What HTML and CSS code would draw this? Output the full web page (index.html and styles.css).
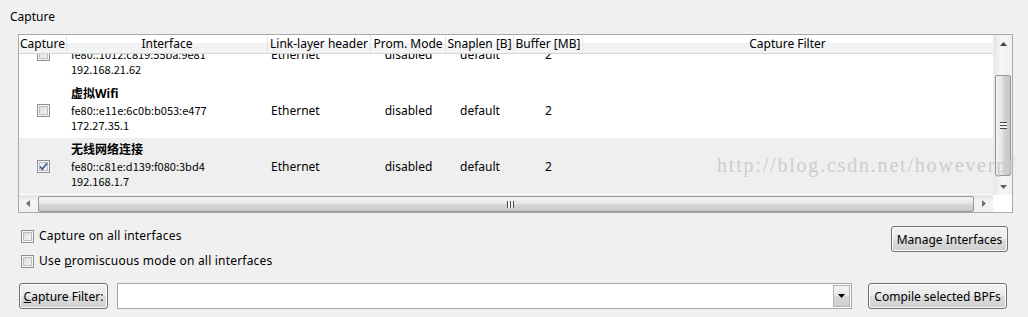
FILE: index.html
```html
<!DOCTYPE html>
<html>
<head>
<meta charset="utf-8">
<link rel="stylesheet" href="styles.css">
</head>
<body>
<div class="panel-title">Capture</div>

<div class="iface-list">
  <div class="viewport">
    <div class="list-head cols">
      <div class="hcell">Capture</div>
      <div class="hcell">Interface</div>
      <div class="hcell">Link-layer header</div>
      <div class="hcell">Prom. Mode</div>
      <div class="hcell">Snaplen [B]</div>
      <div class="hcell">Buffer [MB]</div>
      <div class="hcell last">Capture Filter</div>
    </div>
    <div class="list-body">
      <div class="iface-row cols first">
        <div class="cell-check"><span class="check"></span></div>
        <div class="cell-iface">
          <div class="iface-name">本地连接</div>
          <div class="iface-mac">fe80::1012:c819:55ba:9e81</div>
          <div class="iface-ip">192.168.21.62</div>
        </div>
        <div class="cell-link">Ethernet</div>
        <div class="cell-mid">disabled</div>
        <div class="cell-mid">default</div>
        <div class="cell-mid">2</div>
        <div></div>
      </div>
      <div class="iface-row cols">
        <div class="cell-check"><span class="check"></span></div>
        <div class="cell-iface">
          <div class="iface-name">虚拟Wifi</div>
          <div class="iface-mac">fe80::e11e:6c0b:b053:e477</div>
          <div class="iface-ip">172.27.35.1</div>
        </div>
        <div class="cell-link">Ethernet</div>
        <div class="cell-mid">disabled</div>
        <div class="cell-mid">default</div>
        <div class="cell-mid">2</div>
        <div></div>
      </div>
      <div class="iface-row cols selected">
        <div class="cell-check">
          <span class="check checked">
            <svg width="11" height="11" viewBox="0 0 11 11"><path d="M2 5.5 L4.3 8.2 L9 2.2" fill="none" stroke="#3f5a98" stroke-width="1.7"/></svg>
          </span>
        </div>
        <div class="cell-iface">
          <div class="iface-name">无线网络连接</div>
          <div class="iface-mac">fe80::c81e:d139:f080:3bd4</div>
          <div class="iface-ip">192.168.1.7</div>
        </div>
        <div class="cell-link">Ethernet</div>
        <div class="cell-mid">disabled</div>
        <div class="cell-mid">default</div>
        <div class="cell-mid">2</div>
        <div></div>
      </div>
    </div>
  </div>

  <div class="vscroll">
    <div class="sb-btn">
      <svg width="7" height="4" viewBox="0 0 7 4"><polygon points="0,4 7,4 3.5,0" fill="#404040"/></svg>
    </div>
    <div class="vtrack">
      <div class="vthumb"><span class="vgrip"></span></div>
    </div>
    <div class="sb-btn">
      <svg width="7" height="4" viewBox="0 0 7 4"><polygon points="0,0 7,0 3.5,4" fill="#606060"/></svg>
    </div>
  </div>

  <div class="hscroll">
    <div class="sb-btn hbtn">
      <svg width="4" height="7" viewBox="0 0 4 7"><polygon points="4,0 4,7 0,3.5" fill="#707070"/></svg>
    </div>
    <div class="hthumb"><span class="hgrip"></span></div>
    <div class="sb-btn hbtn">
      <svg width="4" height="7" viewBox="0 0 4 7"><polygon points="0,0 0,7 4,3.5" fill="#707070"/></svg>
    </div>
  </div>
  <div class="corner"></div>
</div>

<div class="options">
  <div class="option-list">
    <label class="option"><span class="check"></span><span>Capture on all interfaces</span></label>
    <label class="option"><span class="check"></span><span>Use <u>p</u>romiscuous mode on all interfaces</span></label>
  </div>
  <button class="btn manage">Manage Interfaces</button>
</div>

<div class="filter-row">
  <button class="btn filter-btn"><u>C</u>apture Filter:</button>
  <div class="combo">
    <span class="combo-text"></span>
    <span class="combo-drop">
      <svg width="7" height="4" viewBox="0 0 7 4"><polygon points="0,0 7,0 3.5,4" fill="#000"/></svg>
    </span>
  </div>
  <button class="btn compile">Compile selected BPFs</button>
</div>

<div class="watermark">http://blog.csdn.net/howeverpf</div>
</body>
</html>
```

FILE: styles.css
```css
body {
  margin: 0;
  width: 1028px;
  height: 317px;
  overflow: hidden;
  position: relative;
  background-color: #f0f0f0;
  font-family: "Noto Sans", "Noto Sans CJK SC", sans-serif;
  font-size: 12px;
  color: #000;
}

.panel-title {
  box-sizing: border-box;
  height: 25px;
  padding: 9px 10px 0;
  line-height: 16px;
}

/* interface list */
.iface-list {
  box-sizing: border-box;
  margin: 9px 0 0 18px;
  width: 995px;
  height: 179px;
  border: 1px solid #a9a9a9;
  background-color: #fff;
  display: grid;
  grid-template-columns: 974px 19px;
  grid-template-rows: 160px 17px;
}

.viewport {
  display: flex;
  flex-direction: column;
  overflow: hidden;
}

.cols {
  display: grid;
  grid-template-columns: 48px 201px 103px 75px 68px 69px 1fr;
}

.list-head {
  box-sizing: border-box;
  height: 19px;
  flex: none;
  border-bottom: 1px solid #d5d5d5;
  background: linear-gradient(#ffffff 0 8px, #f2f3f5 8px);
  position: relative;
  z-index: 1;
}
.hcell {
  line-height: 18px;
  text-align: center;
  white-space: nowrap;
  overflow: hidden;
  border-right: 1px solid #e3e5e8;
}
.hcell.last { border-right: 0; margin-right: 1px; }

.list-body {
  flex: 1;
  overflow: hidden;
}

.iface-row {
  height: 56px;
  align-items: center;
}
.iface-row.first { margin-top: -28px; }
.iface-row.selected { background-color: #efefef; }

.cell-check {
  display: flex;
  justify-content: center;
  padding-left: 1px;
}
.cell-iface {
  align-self: start;
  padding: 4px 0 0 4px;
}
.iface-name { font-weight: bold; line-height: 16px; }
.iface-mac,
.iface-ip {
  font-family: "Noto Sans CJK SC", "Noto Sans", sans-serif;
  font-size: 11px;
}
.iface-mac { line-height: 16px; }
.iface-ip { line-height: 14px; }
.cell-link { padding-left: 3px; }
.cell-mid { text-align: center; }

.check {
  box-sizing: border-box;
  display: inline-flex;
  align-items: center;
  justify-content: center;
  width: 13px;
  height: 13px;
  flex: none;
  border: 1px solid #8e8f8f;
  background: linear-gradient(135deg, #d3d6da, #fbfbfb);
  box-shadow: inset 0 0 0 1px #f6f6f6, inset 0 0 0 2px #b9bdc2;
}
.check.checked {
  background: linear-gradient(135deg, #dfe3ea, #fbfbfb);
}

/* scrollbars */
.sb-btn {
  height: 17px;
  flex: none;
  display: flex;
  align-items: center;
  justify-content: center;
}
.vscroll {
  display: flex;
  flex-direction: column;
  background: linear-gradient(90deg, #e6e6e6, #f6f6f6 40%, #f0f0f0);
  border-left: 1px solid #ececec;
}
.vtrack { flex: 1; padding: 23px 1px 0 1px; }
.vthumb {
  box-sizing: border-box;
  height: 101px;
  border: 1px solid #979797;
  border-radius: 2px;
  background: linear-gradient(90deg, #f2f2f2, #e6e6e6 45%, #d4d4d4 55%, #c6c6c6);
  display: flex;
  align-items: center;
  justify-content: center;
}
.vgrip {
  width: 7px;
  height: 7px;
  background: repeating-linear-gradient(#4a4a4a 0 1px, #f4f4f4 1px 3px);
}

.hscroll {
  display: flex;
  background: linear-gradient(#e4e4e4, #f5f5f5 40%, #efefef);
}
.hbtn { width: 18px; height: auto; }
.hthumb {
  box-sizing: border-box;
  flex: 1;
  margin: 1px 1px 0;
  border: 1px solid #979797;
  border-radius: 2px;
  background: linear-gradient(#f3f3f3, #e7e7e7 45%, #d6d6d6 55%, #c9c9c9);
  display: flex;
  align-items: center;
  justify-content: center;
}
.hgrip {
  width: 7px;
  height: 7px;
  margin-left: 8px;
  background: repeating-linear-gradient(90deg, #4a4a4a 0 1px, #f4f4f4 1px 3px);
}
.corner { background-color: #fff; }

/* options */
.options {
  display: flex;
  justify-content: space-between;
  align-items: flex-start;
  margin-top: 13px;
  padding: 0 20px 0 21px;
}
.option-list {
  display: flex;
  flex-direction: column;
  gap: 9px;
  padding-top: 2px;
  letter-spacing: 0.2px;
}
.option {
  display: flex;
  align-items: center;
  gap: 5px;
  line-height: 16px;
}

.btn {
  box-sizing: border-box;
  height: 26px;
  padding: 0;
  border: 1px solid #707070;
  border-radius: 3px;
  background: linear-gradient(#f2f2f2, #ebebeb 48%, #dddddd 52%, #cfcfcf);
  box-shadow: inset 0 0 0 1px #fbfbfb;
  font: inherit;
  color: #000;
  text-align: center;
}
.manage { width: 117px; }

.filter-row {
  display: flex;
  align-items: center;
  margin-top: 14px;
  padding-left: 19px;
}
.filter-btn { width: 89px; }
.combo {
  box-sizing: border-box;
  width: 735px;
  height: 26px;
  margin: 0 16px 0 9px;
  border: 1px solid #a6a6a6;
  background-color: #fff;
  display: flex;
  justify-content: flex-end;
  padding: 1px;
}
.combo-drop {
  box-sizing: border-box;
  width: 17px;
  border: 1px solid #b4b4b4;
  background: linear-gradient(#f4f4f4, #e8e8e8 50%, #d9d9d9 51%, #d0d0d0);
  display: flex;
  align-items: center;
  justify-content: center;
}
.compile { width: 139px; }

.watermark {
  position: absolute;
  left: 717px;
  top: 155px;
  font-family: "Liberation Serif", serif;
  font-size: 20px;
  line-height: 20px;
  letter-spacing: 1.8px;
  color: #cdcdcd;
  white-space: nowrap;
  z-index: 2;
}
```
